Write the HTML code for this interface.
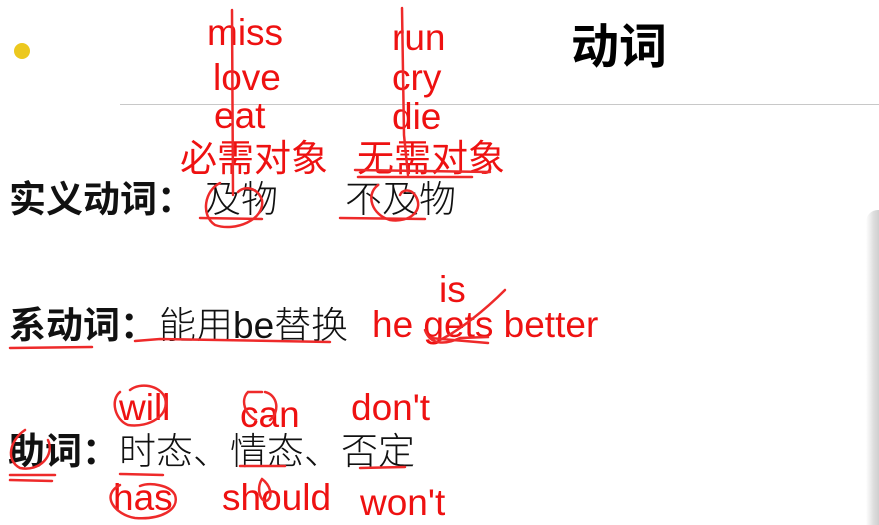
<!DOCTYPE html>
<html><head><meta charset="utf-8"><style>
html,body{margin:0;padding:0;background:#fff;width:879px;height:525px;overflow:hidden;position:relative}
.t{position:absolute;white-space:nowrap;line-height:1}
.en{font-family:"Liberation Sans",sans-serif;font-size:37px;color:#ee1111}
.cn{font-family:"Liberation Sans","Noto Sans CJK SC",sans-serif;font-size:37px;color:#111}
.b{font-weight:bold}
.l{font-weight:300}
.rc{font-family:"Liberation Sans","Noto Sans CJK SC",sans-serif;font-size:37px;color:#ee1111;font-weight:normal}
</style></head><body>
<div style="position:absolute;left:14px;top:43px;width:16px;height:16px;border-radius:50%;background:#ecc81e"></div>
<div class="t cn b" style="left:571px;top:24px;font-size:48px;color:#000">动词</div>
<div style="position:absolute;left:120px;top:104px;width:760px;height:1px;background:#c8c8c8"></div>
<div style="position:absolute;left:866px;top:210px;width:13px;height:315px;background:linear-gradient(to right,#fff,#ddd 60%,#cfcfcf);border-top-left-radius:12px"></div>

<div class="t en" style="left:207px;top:14px">miss</div>
<div class="t en" style="left:213px;top:59px">love</div>
<div class="t en" style="left:214px;top:97px">eat</div>
<div class="t en" style="left:392px;top:19px">run</div>
<div class="t en" style="left:392px;top:59px">cry</div>
<div class="t en" style="left:392px;top:98px">die</div>
<div class="t rc" style="left:180px;top:140px">必需对象</div>
<div class="t rc" style="left:357px;top:140px">无需对象</div>

<div class="t cn b" style="left:9px;top:181px">实义动词：</div>
<div class="t cn l" style="left:204px;top:181px">及物</div>
<div class="t cn l" style="left:345px;top:181px">不及物</div>

<div class="t cn b" style="left:9px;top:307px">系动词：</div>
<div class="t cn l" style="left:159px;top:307px">能用be替换</div>
<div class="t en" style="left:372px;top:306px">he gets better</div>
<div class="t en" style="left:439px;top:271px">is</div>

<div class="t cn b" style="left:8px;top:433px">助词：</div>
<div class="t cn l" style="left:119px;top:433px">时态、情态、否定</div>
<div class="t en" style="left:119px;top:389px">will</div>
<div class="t en" style="left:240px;top:396px">can</div>
<div class="t en" style="left:351px;top:389px">don't</div>
<div class="t en" style="left:113px;top:479px">has</div>
<div class="t en" style="left:222px;top:479px">should</div>
<div class="t en" style="left:360px;top:484px">won't</div>

<svg width="879" height="525" style="position:absolute;left:0;top:0" fill="none" stroke="#ee2a2a" stroke-width="2.5" stroke-linecap="round">
<path d="M232 10 L233 195"/>
<path d="M402 8 L404 135 L408 175"/>
<path d="M358 177 L472 177 M355 170 L490 172"/>
<path d="M220 183 C205 190 200 215 215 225 C235 232 265 220 262 200 C258 188 245 185 238 192"/>
<path d="M200 218 L262 219"/>
<path d="M378 185 C365 195 372 215 390 220 C410 223 425 210 415 195 C410 188 402 190 400 195"/>
<path d="M340 218 L425 219"/>
<path d="M10 348 L92 347"/>
<path d="M135 341 L160 339 L330 342"/>
<path d="M425 330 C430 345 445 345 460 338 L488 337 M430 338 L488 343 M440 340 C460 330 485 310 505 290"/>
<path d="M120 392 C110 400 115 420 128 425 C150 428 170 415 165 398 C160 385 140 382 130 390"/>
<path d="M248 392 L262 392 M265 392 C278 395 280 412 270 420 M248 392 C240 400 245 415 256 420"/>
<path d="M25 430 C10 440 5 460 20 468 C40 472 55 455 48 440"/>
<path d="M10 475 L55 475 M10 480 L52 481"/>
<path d="M120 474 L163 475"/>
<path d="M240 466 L285 466"/>
<path d="M360 468 L405 467"/>
<path d="M120 485 C100 495 115 515 135 518 C160 520 180 510 175 495 C170 485 150 482 140 486"/>
<path d="M262 479 C255 490 262 505 268 500 C273 495 270 485 262 479"/>
</svg>
</body></html>
